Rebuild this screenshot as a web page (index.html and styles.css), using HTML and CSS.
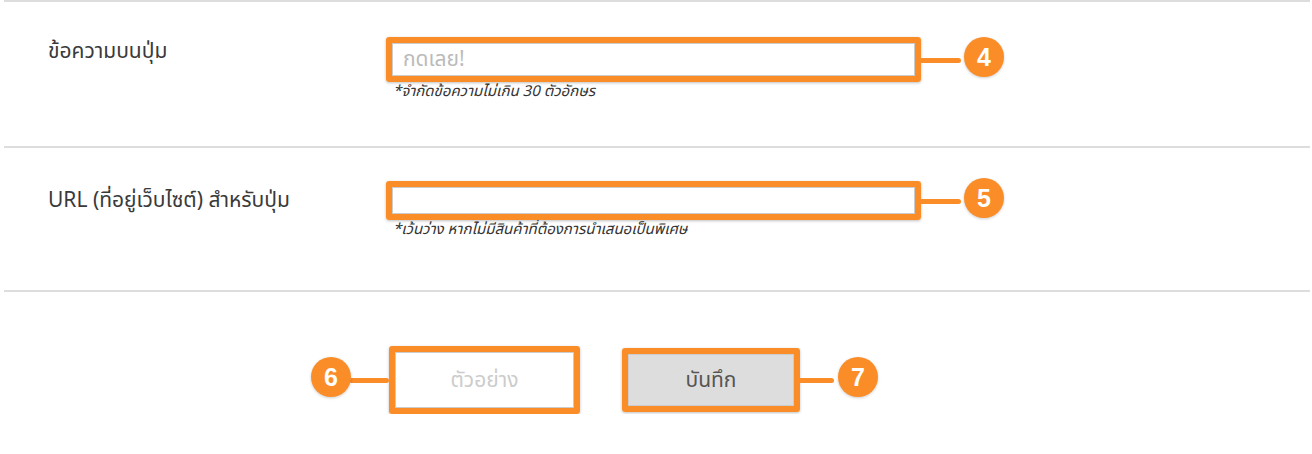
FILE: index.html
```html
<!DOCTYPE html>
<html lang="th">
<head>
  <meta charset="UTF-8">
  <title>ตั้งค่าปุ่ม</title>
  <link rel="stylesheet" href="styles.css">
</head>
<body>

  <div class="form">
    <div class="row row-first">
      <div class="label">ข้อความบนปุ่ม</div>
      <div class="field">
        <div class="mark">
          <input class="input input-tall" type="text" placeholder="กดเลย!">
          <span class="link link-right"></span>
          <span class="pin pin-right">4</span>
        </div>
        <p class="hint">*จำกัดข้อความไม่เกิน 30 ตัวอักษร</p>
      </div>
    </div>

    <div class="row row-second">
      <div class="label">URL (ที่อยู่เว็บไซต์) สำหรับปุ่ม</div>
      <div class="field">
        <div class="mark">
          <input class="input input-short" type="text">
          <span class="link link-right"></span>
          <span class="pin pin-right">5</span>
        </div>
        <p class="hint">*เว้นว่าง หากไม่มีสินค้าที่ต้องการนำเสนอเป็นพิเศษ</p>
      </div>
    </div>

    <div class="actions">
      <div class="mark mark-btn">
        <button class="btn btn-preview">ตัวอย่าง</button>
        <span class="link link-left"></span>
        <span class="pin pin-left">6</span>
      </div>
      <div class="mark mark-btn">
        <button class="btn btn-save">บันทึก</button>
        <span class="link link-right link-short"></span>
        <span class="pin pin-right pin-near">7</span>
      </div>
    </div>
  </div>

</body>
</html>
```

FILE: styles.css
```css
body {
  margin: 0;
  background: #fff;
  font-family: "Noto Sans Thai", "Noto Sans", "Liberation Sans", sans-serif;
  color: #333;
}

.form {
  margin: 0 2px 0 4px;
  border-top: 2px solid #ddd;
}

.row {
  display: grid;
  grid-template-columns: 382px 1fr;
  border-bottom: 2px solid #ddd;
  box-sizing: border-box;
}

.row-first {
  height: 146px;
  padding-top: 35px;
}

.row-second {
  height: 144px;
  padding-top: 33px;
}

.label {
  padding-left: 44px;
  font-size: 21px;
  line-height: 30px;
  color: #3a3a3a;
}

.row-second .label {
  padding-top: 5px;
}

.field {
  display: flex;
  flex-direction: column;
  align-items: flex-start;
}

/* orange annotation frame */
.mark {
  position: relative;
  display: inline-flex;
  border: 6px solid #fb8d28;
  border-radius: 3px;
  box-shadow: 0 1px 3px rgba(0, 0, 0, 0.25);
}

.input {
  width: 523px;
  margin: 0;
  padding: 0 10px;
  border: 1px solid #ccc;
  border-radius: 0;
  box-sizing: border-box;
  font-family: inherit;
  font-size: 21px;
  color: #333;
  outline: none;
}

.input::placeholder {
  color: #bbb;
}

.input-tall {
  height: 33px;
}

.input-short {
  height: 27px;
}

.hint {
  margin: 1px 0 0 7px;
  font-size: 15px;
  line-height: 18px;
  font-style: italic;
  color: #333;
}

.link {
  position: absolute;
  top: 50%;
  width: 46px;
  height: 5px;
  margin-top: -2px;
  background: #fb8d28;
  border-radius: 3px;
}

.link-right {
  left: 100%;
}

.link-short {
  width: 40px;
}

.link-left {
  right: calc(100% + 6px);
  width: 40px;
}

.pin {
  position: absolute;
  top: 50%;
  width: 40px;
  height: 40px;
  margin-top: -23px;
  border-radius: 50%;
  background: #fb8d28;
  color: #fff;
  font-family: "Liberation Sans", sans-serif;
  font-weight: bold;
  font-size: 25px;
  line-height: 40px;
  text-align: center;
  box-shadow: 0 1px 3px rgba(0, 0, 0, 0.2);
}

.pin-right {
  left: calc(100% + 49px);
}

.pin-near {
  left: calc(100% + 44px);
}

.pin-left {
  right: calc(100% + 44px);
}

.actions {
  display: flex;
  align-items: center;
  gap: 42px;
  padding: 54px 0 0 385px;
}

.btn {
  margin: 0;
  border: 1px solid #ccc;
  font-family: inherit;
  font-size: 21px;
  cursor: pointer;
}

.btn-preview {
  width: 179px;
  height: 56px;
  background: #fff;
  color: #ccc;
}

.btn-save {
  width: 166px;
  height: 52px;
  background: #ddd;
  color: #555;
}
```
